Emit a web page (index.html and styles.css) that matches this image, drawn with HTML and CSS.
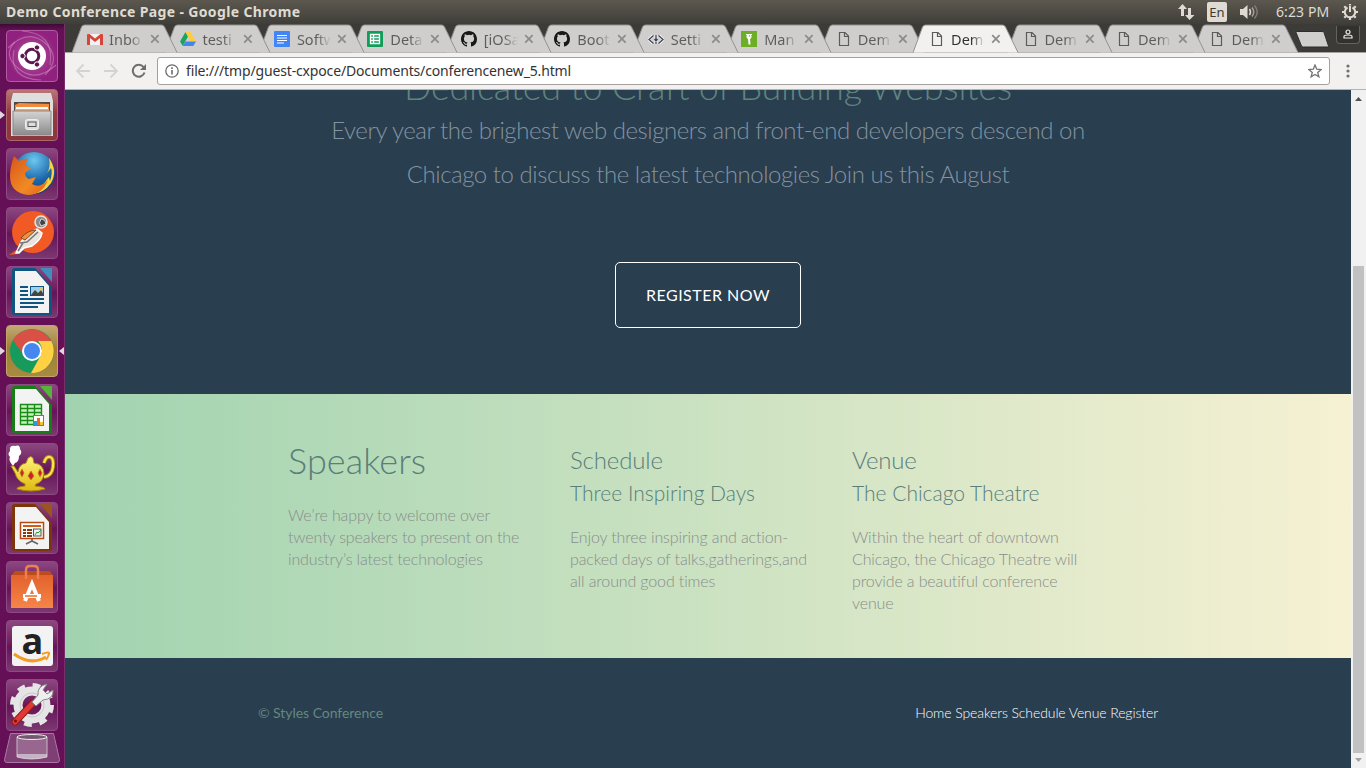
FILE: index.html
```
<!DOCTYPE html>
<html lang="en">
<head>
<meta charset="utf-8">
<title>Demo Conference Page</title>
<link rel="stylesheet" href="styles.css">
</head>
<body>
<svg class="defs" width="0" height="0">
  <defs>
    <linearGradient id="metal" x1="0" y1="0" x2="0" y2="1"><stop offset="0" stop-color="#d4d4d4"/><stop offset="1" stop-color="#8b8b8b"/></linearGradient>
    <linearGradient id="bag" x1="0" y1="0" x2="0" y2="1"><stop offset="0" stop-color="#e2622c"/><stop offset="1" stop-color="#f58549"/></linearGradient>
    <linearGradient id="gold" x1="0" y1="0" x2="0" y2="1"><stop offset="0" stop-color="#fff27a"/><stop offset="1" stop-color="#dfb80d"/></linearGradient>
    <radialGradient id="globe" cx=".5" cy=".2" r=".8"><stop offset="0" stop-color="#6cc8f0"/><stop offset=".6" stop-color="#1d67ab"/><stop offset="1" stop-color="#123c78"/></radialGradient>
    <linearGradient id="fox" x1="0" y1="0" x2="1" y2="1"><stop offset="0" stop-color="#d9541a"/><stop offset=".6" stop-color="#f08a24"/><stop offset="1" stop-color="#e2601a"/></linearGradient>
  </defs>
  <symbol id="close" viewBox="0 0 10 10"><path d="M1.2 1.2l7.4 7.4M8.600 1.200l-7.400 7.400" stroke="#8d8b89" stroke-width="1.7"/></symbol>
  <symbol id="page" viewBox="0 0 16 16"><path d="M4.500 1.500h5.500l3.500 3.500v9.500h-9zM9.500 1.500v4h4" fill="none" stroke="#5c5b59" stroke-width="1.200"/></symbol>
  <symbol id="octocat" viewBox="0 0 16 16"><path fill="#191717" d="M8 0C3.580 0 0 3.580 0 8c0 3.540 2.290 6.530 5.470 7.590.4.070.550-.170.550-.380 0-.190-.010-.820-.010-1.490-2.010.370-2.530-.490-2.690-.940-.090-.230-.480-.940-.820-1.130-.280-.150-.680-.520-.010-.530.630-.010 1.080.580 1.230.820.720 1.210 1.870.870 2.330.660.070-.520.280-.870.510-1.070-1.780-.2-3.640-.890-3.640-3.950 0-.870.310-1.590.820-2.150-.080-.2-.360-1.020.080-2.120 0 0 .670-.210 2.200.820a7.600 7.600 0 0 1 4 0c1.530-1.040 2.200-.820 2.200-.820.440 1.100.160 1.920.080 2.120.510.560.820 1.270.820 2.150 0 3.070-1.870 3.750-3.650 3.950.290.250.540.730.540 1.480 0 1.070-.010 1.930-.010 2.200 0 .210.150.460.550.380A8 8 0 0 0 16 8c0-4.420-3.580-8-8-8z"/></symbol>
</svg>

<header class="panel">
  <h1 class="panel-title">Demo Conference Page - Google Chrome</h1>
  <div class="indicators">
    <svg width="18" height="16" viewBox="0 0 18 16"><path fill="#dfdbd2" d="M5.500 0l4.500 5H7v7H4V5H1zM12.500 16l-4.500-5h3V4h3v7h3.500z"/></svg>
    <span class="lang">En</span>
    <svg width="20" height="16" viewBox="0 0 20 16"><path fill="#dfdbd2" d="M0 5h3l4.500-4v14L3 11H0z"/><g fill="none" stroke-width="1.500"><path stroke="#dfdbd2" d="M9.500 5q2 3 0 6"/><path stroke="#a5a299" d="M12 3.500q3.500 4.500 0 9"/><path stroke="#7e7b73" d="M14.500 1.500q5.500 6.500 0 13"/></g></svg>
    <span class="clock">6:23 PM</span>
    <svg width="18" height="18" viewBox="0 0 18 18"><g fill="none" stroke="#dfdbd2" stroke-width="2"><path d="M6.500 4.500a5.200 5.200 0 1 0 5 0M9 3v6"/><path stroke-width="2.200" d="M9 1v1.500M9 14.500V17M1 9h2.500M14.500 9H17M3.300 3.300l1.500 1.500M13.200 13.200l1.500 1.500M14.700 3.300l-1.500 1.500M4.800 13.200l-1.500 1.500"/></g></svg>
  </div>
</header>

<div class="desktop">
  <nav class="launcher">
    <div class="tile dash"><svg viewBox="0 0 52 52"><g fill="none" stroke="#d9a4cf" stroke-opacity=".45" stroke-width="1.200"><path d="M2 18Q22-2 39 13T39 45"/><path d="M50 35Q30 53 13 39T9 12"/><path d="M16 1q33 2 28 34M35 50Q2 49 8 20"/></g><circle cx="26" cy="26" r="14" fill="#fff"/><circle cx="26" cy="26" r="6.800" fill="none" stroke="#5c1751" stroke-width="3"/><g fill="#5c1751" stroke="#fff"><circle cx="16.500" cy="26" r="2.700"/><circle cx="31" cy="17.500" r="2.700"/><circle cx="31" cy="34.500" r="2.700"/></g></svg></div>
    <div class="tile files running"><svg viewBox="0 0 52 52"><path fill="#dedede" d="M7 4h38l2 8v35H5V12z"/><path fill="#514b47" d="M8 13h36v10H8z"/><path fill="#f58a3c" d="M9 16l4-2 30 1v6H9z"/><path fill="#fff" d="M10 18h32v2H10z"/><path fill="#f2a768" d="M9 20h34v2H9z"/><path fill="url(#metal)" d="M7 22h38v24H7z" stroke="#888"/><rect x="19.500" y="30.500" width="13" height="10" rx="2" fill="#ddd" stroke="#eee"/><rect x="22" y="33" width="8" height="4.500" fill="#ddd" stroke="#555"/></svg></div>
    <div class="tile"><svg viewBox="0 0 52 52"><circle cx="28" cy="25" r="21" fill="url(#globe)"/><path fill="#fcd638" d="M43 10q9 13 2 25-8 12-22 11l-7-5 17 1 10-13 1 4q3-9 1-13l-4 5q4-6 2-15z"/><path fill="url(#fox)" d="M8 8l5 5q6-3 9-2l-3 6 6 3-6 5q0 4 4 6l7-2-4 7q7 5 16-4-6 15-20 15Q4 45 4 28q0-9 4-20z"/></svg></div>
    <div class="tile"><svg viewBox="0 0 52 52"><circle cx="27" cy="25" r="21" fill="#f15a24"/><path fill="#f15a24" d="M3 48l10-7-2 6z"/><path fill="#e9e4df" stroke="#fff" stroke-width="1.500" d="M10 46l5-11q6-9 16-13l5 4q-1 7-10 13l-8 2-5 5z"/><path fill="#f5912e" stroke="#7a4b33" d="M15 31q7-8 15-8l-11 10z"/><path fill="none" stroke="#777" stroke-width="1.500" d="M14 36l7-1 11-10M12 44l5-8"/><circle cx="35" cy="15" r="6" fill="#888b8c" stroke="#e8e6e3" stroke-width="1.500"/><path fill="#444" stroke="#ddd" d="M35 12q4 0 5 5l-5 2q-3-3 0-7z"/></svg></div>
    <div class="tile"><svg viewBox="0 0 52 52"><path fill="#105481" d="M9 2h20l17 19v26q0 2-2 2H9q-3 0-3-3V5q0-3 3-3z"/><path fill="#f3f3f3" d="M9 5h21l13 15v27H9z"/><path fill="#438dbd" d="M34 2h12v14z"/><path stroke="#105481" stroke-width="2" d="M14 21h8M14 25h8M14 29h8M14 33h24M14 37h24M14 41h18"/><rect x="24.500" y="20.500" width="13" height="9" fill="#9ccfe9" stroke="#105481"/><path fill="#444" d="M25 29l4-5 3 3 3-3 3 5z"/><circle cx="35" cy="23" r="1.500" fill="#f9c440"/></svg></div>
    <div class="tile chrome running active"><svg viewBox="0 0 52 52"><circle cx="26" cy="26" r="22" fill="#169b5c"/><path fill="#d95045" d="M6.900 15A22 22 0 0 1 45.100 16H26a10 10 0 0 0-9 13z"/><path fill="#ffcf44" d="M45.300 16A22 22 0 0 1 25 48l10-18q3-7-3-14z"/><circle cx="26" cy="26" r="10" fill="#fff"/><circle cx="26" cy="26" r="8" fill="#4488ef"/></svg></div>
    <div class="tile"><svg viewBox="0 0 52 52"><path fill="#187d16" d="M9 2h20l17 19v26q0 2-2 2H9q-3 0-3-3V5q0-3 3-3z"/><path fill="#f3f3f3" d="M9 5h21l13 15v27H9z"/><path fill="#55b33a" d="M34 2h12v14z"/><path fill="#c8f0be" stroke="#188c17" stroke-width="1.400" d="M14.500 20.500h21v20h-21zM14 24.500h22M14 28.500h22M14 32.500h22M14 36.500h22M21.500 20v20M28.500 20v20"/><rect x="27.500" y="31.500" width="10" height="10" fill="#fff" stroke="#777"/><path fill="#2a9ae0" d="M28 37h3v4h-3z"/><path fill="#e66a21" d="M31 34h3v7h-3z"/><path fill="#f1c22e" d="M34 38h3v3h-3z"/></svg></div>
    <div class="tile"><svg viewBox="0 0 52 52"><path fill="#fff" d="M7 23q-5-6-3-9-3-3 0-6-1-6 5-5 5-2 5 3 3 4-1 7 0 6-4 7z"/><path fill="none" stroke="#a88610" stroke-width="4" d="M38 20q2-7 6-6 4 1 3 10-1 9-9 10"/><path fill="none" stroke="#f9e54d" stroke-width="2.200" d="M38 20q2-7 6-6 4 1 3 10-1 9-9 10"/><path fill="url(#gold)" stroke="#a88610" d="M5 23l3 0 4 6q1-8 8-9l2-5q3-3 5 0l1 5q10 1 10 11-1 8-8 10l-1 2q10 1 10 3-14 4-28 0-1-2 8-3v-2q-8-3-10-11z"/><path fill="#d21d2c" stroke="#ac8b12" stroke-width=".7" d="M16 26l2 4-2 4-2-4zM25 28l3 5-3 4-3-4zM34 26l2 4-2 4-2-4z"/></svg></div>
    <div class="tile"><svg viewBox="0 0 52 52"><path fill="#7d3509" d="M9 2h20l17 19v26q0 2-2 2H9q-3 0-3-3V5q0-3 3-3z"/><path fill="#f3f3f3" d="M9 5h21l13 15v27H9z"/><path fill="#9b5422" d="M34 2h12v14z"/><path fill="#fff" stroke="#b64a10" stroke-width="1.500" d="M14.500 20.500h23v16h-23z"/><path stroke="#d35b16" stroke-width="2" d="M17 24h18"/><path stroke="#883b11" stroke-width="2" stroke-dasharray="3 1 6" d="M17 28h9M17 31h9M17 34h9"/><rect x="27.500" y="27" width="7.500" height="7" fill="#eee" stroke="#555"/><path fill="none" stroke="#2aa33a" d="M29 33l2-3 1 1 3-3"/><path fill="none" stroke="#666" stroke-width="1.700" d="M26 37v2l-6 3M26 39l6 3"/></svg></div>
    <div class="tile"><svg viewBox="0 0 52 52"><path fill="#bd4c1d" d="M5 15l4-5h35l3 5z"/><path fill="url(#bag)" d="M5 14h42v33H5z"/><path fill="none" stroke="#ec8052" stroke-width="2.500" d="M20 18V9q0-4 4-4h4q4 0 4 4v9"/><path fill="none" stroke="#fff" stroke-width="4" d="M19 40l7-17 7 17"/><path stroke="#fff" stroke-width="4" d="M17 35h18"/><path stroke="#ed6a2e" stroke-width="1.500" d="M19 35h12"/></svg></div>
    <div class="tile"><svg viewBox="0 0 52 52"><rect x="6" y="6" width="41" height="40" rx="3" fill="#f3f3f3"/><text class="amazon-a" x="15.500" y="33.500">a</text><path fill="none" stroke="#f79a20" stroke-width="3" d="M8 34q17 12 32 3"/><path fill="none" stroke="#f79a20" stroke-width="2" d="M36 34q8-3 7 0t-3 6"/></svg></div>
    <div class="tile"><svg viewBox="0 0 52 52"><g fill="none" stroke="#e5e5e5"><circle cx="26" cy="26" r="14" stroke-width="9"/><circle cx="26" cy="26" r="19.500" stroke-width="5" stroke-dasharray="7.660 7.660"/></g><circle cx="26" cy="26" r="12" fill="none" stroke="#c9c9c9"/><path stroke="#9b1717" stroke-width="7" stroke-linecap="round" d="M9 43l18-19"/><path stroke="#dc3a35" stroke-width="5" stroke-linecap="round" d="M9 43l18-19"/><path fill="#eee" stroke="#888" d="M26 23l6-7q-1-9 9-11l-4 6 4 4 6-4q1 9-10 10l-7 6z"/><circle cx="9.500" cy="42" r="1.500" fill="#711"/></svg></div>
    <div class="trash"><svg viewBox="0 0 56 31"><path fill="#7f3f75" stroke="#a87aa1" d="M6.500.5h43l6 26q0 3-2 3h-51q-2 0-2-3z"/><path fill="#b59ab1" fill-opacity=".45" stroke="#c9bcc7" d="M13 4v20q14 4 30 0V4z"/><ellipse cx="28" cy="4" rx="15" ry="2.500" fill="#735a70" stroke="#eee"/><path fill="#e8e3e7" fill-opacity=".6" d="M13 21h30v3q-15 4-30 0z"/></svg></div>
  </nav>

  <section class="browser">
    <div class="tabs">
      <div class="tab"><svg class="shape" viewBox="0 0 105 29"><path d="M0 28.500L9.500 3q1-2 3-2h77q2 0 3 2L105 28.500"/></svg><svg class="icon" viewBox="0 0 16 16"><path fill="#f2f2f2" d="M1 3h14v11H1z"/><path d="M1 3h1.500L8 7.500 13.500 3H15q1 0 1 1v10h-3V7L8 11 3 7v7H0V4q0-1 1-1z" fill="#d8443a"/></svg><span>Inbo</span><svg class="x"><use href="#close"/></svg></div>
      <div class="tab"><svg class="shape" viewBox="0 0 105 29"><path d="M0 28.500L9.500 3q1-2 3-2h77q2 0 3 2L105 28.500"/></svg><svg class="icon" viewBox="0 0 16 16"><path fill="#19a461" d="M5.500 1L0 10.500 2.800 15 8 5.500z"/><path fill="#fdcc3f" d="M5.500 1h5L16 10.500h-5.500z"/><path fill="#4285ee" d="M5.500 10.500H16L13.300 15H2.800z"/></svg><span>testi</span><svg class="x"><use href="#close"/></svg></div>
      <div class="tab"><svg class="shape" viewBox="0 0 105 29"><path d="M0 28.500L9.500 3q1-2 3-2h77q2 0 3 2L105 28.500"/></svg><svg class="icon" viewBox="0 0 16 16"><rect width="16" height="16" rx="1" fill="#4285f4"/><path stroke="#fff" stroke-width="1.200" d="M3 4.500h10M3 7h10M3 9.500h10M3 12h7"/></svg><span>Softw</span><svg class="x"><use href="#close"/></svg></div>
      <div class="tab"><svg class="shape" viewBox="0 0 105 29"><path d="M0 28.500L9.500 3q1-2 3-2h77q2 0 3 2L105 28.500"/></svg><svg class="icon" viewBox="0 0 16 16"><rect width="16" height="16" rx="1" fill="#0f9d58"/><path fill="none" stroke="#fff" stroke-width="1.300" d="M3.500 3.500h9v9h-9zM3.500 6.500h9M3.500 9.500h9M6.500 3.500v9"/></svg><span>Deta</span><svg class="x"><use href="#close"/></svg></div>
      <div class="tab"><svg class="shape" viewBox="0 0 105 29"><path d="M0 28.500L9.500 3q1-2 3-2h77q2 0 3 2L105 28.500"/></svg><svg class="icon"><use href="#octocat"/></svg><span>[iOSa</span><svg class="x"><use href="#close"/></svg></div>
      <div class="tab"><svg class="shape" viewBox="0 0 105 29"><path d="M0 28.500L9.500 3q1-2 3-2h77q2 0 3 2L105 28.500"/></svg><svg class="icon"><use href="#octocat"/></svg><span>Boot</span><svg class="x"><use href="#close"/></svg></div>
      <div class="tab"><svg class="shape" viewBox="0 0 105 29"><path d="M0 28.500L9.500 3q1-2 3-2h77q2 0 3 2L105 28.500"/></svg><svg class="icon" viewBox="0 0 16 16"><g fill="none" stroke="#f5f5f5" stroke-width="3"><path d="M5 4.500L1 8.500l4 4M11 4.500l4 4-4 4M8 4v9"/></g><g fill="none" stroke="#3c4252" stroke-width="1.300"><path d="M5.500 4.500L1 8.500l4.500 4M10.500 4.500l4.500 4-4.500 4M8 4v5M6.500 8L8 10l1.500-2M8 11v2"/></g></svg><span>Setti</span><svg class="x"><use href="#close"/></svg></div>
      <div class="tab"><svg class="shape" viewBox="0 0 105 29"><path d="M0 28.500L9.500 3q1-2 3-2h77q2 0 3 2L105 28.500"/></svg><svg class="icon" viewBox="0 0 16 16"><path fill="#6dae27" d="M0 0h16v16H0z"/><path fill="none" stroke="#fff" stroke-width="2" d="M8.500 13.500L8 7"/><circle cx="8" cy="5.500" r="2.500" fill="#fff"/><path stroke="#fff" d="M5 3.500h2M9 3.500h2"/><circle cx="8.500" cy="5" r=".8" fill="#6dae27"/></svg><span>Man</span><svg class="x"><use href="#close"/></svg></div>
      <div class="tab"><svg class="shape" viewBox="0 0 105 29"><path d="M0 28.500L9.500 3q1-2 3-2h77q2 0 3 2L105 28.500"/></svg><svg class="icon"><use href="#page"/></svg><span>Dem</span><svg class="x"><use href="#close"/></svg></div>
      <div class="tab current"><svg class="shape" viewBox="0 0 105 29"><path d="M0 28.500L9.500 3q1-2 3-2h77q2 0 3 2L105 28.500"/></svg><svg class="icon"><use href="#page"/></svg><span>Dem</span><svg class="x"><use href="#close"/></svg></div>
      <div class="tab"><svg class="shape" viewBox="0 0 105 29"><path d="M0 28.500L9.500 3q1-2 3-2h77q2 0 3 2L105 28.500"/></svg><svg class="icon"><use href="#page"/></svg><span>Dem</span><svg class="x"><use href="#close"/></svg></div>
      <div class="tab"><svg class="shape" viewBox="0 0 105 29"><path d="M0 28.500L9.500 3q1-2 3-2h77q2 0 3 2L105 28.500"/></svg><svg class="icon"><use href="#page"/></svg><span>Dem</span><svg class="x"><use href="#close"/></svg></div>
      <div class="tab"><svg class="shape" viewBox="0 0 105 29"><path d="M0 28.500L9.500 3q1-2 3-2h77q2 0 3 2L105 28.500"/></svg><svg class="icon"><use href="#page"/></svg><span>Dem</span><svg class="x"><use href="#close"/></svg></div>
      <svg class="new-tab" width="34" height="17" viewBox="0 0 34 17"><path fill="#d0cecc" stroke="#2e2d29" d="M2 .5h25q1.500 0 2 1L33.500 15q0 1-1 1h-24q-1.500 0-2-1L1 1.500q0-1 1-1z"/></svg>
      <div class="profile"><svg width="10" height="10" viewBox="0 0 10 10"><path fill="none" stroke="#eee" stroke-width="1.200" d="M1 9V7.500Q1 6 5 6t4 1.500V9z"/><circle cx="5" cy="3" r="2" fill="none" stroke="#eee" stroke-width="1.200"/></svg></div>
    </div>
    <div class="toolbar">
      <svg width="16" height="16" viewBox="0 0 16 16"><path fill="none" stroke="#d5d3d1" stroke-width="1.800" d="M15 8H2M8.500 1.500L2 8l6.500 6.500"/></svg>
      <svg width="16" height="16" viewBox="0 0 16 16"><path fill="none" stroke="#d5d3d1" stroke-width="1.800" d="M1 8h13M7.500 1.500L14 8l-6.500 6.500"/></svg>
      <svg width="16" height="16" viewBox="0 0 16 16"><path fill="none" stroke="#6e6d6b" stroke-width="2" d="M13.500 9.500A6 6 0 1 1 12.500 4L14 5.500"/><path fill="#6e6d6b" d="M15 1v6H9z"/></svg>
      <div class="address">
        <svg width="14" height="14" viewBox="0 0 14 14"><circle cx="7" cy="7" r="6.200" fill="none" stroke="#6b6b6b" stroke-width="1.300"/><path stroke="#6b6b6b" stroke-width="1.600" d="M7 6v4.500M7 3.300v1.600"/></svg>
        <span class="url">file:///tmp/guest-cxpoce/Documents/conferencenew_5.html</span>
        <svg width="14" height="14" viewBox="0 0 14 14"><path fill="none" stroke="#737373" stroke-width="1.300" d="M7 1l1.700 4.200 4.500.3-3.500 2.900 1.200 4.400L7 10.400l-3.900 2.400 1.200-4.400L.8 5.500l4.500-.3z"/></svg>
      </div>
      <svg class="menu" width="4" height="14" viewBox="0 0 4 14"><g fill="#707070"><circle cx="2" cy="2" r="1.600"/><circle cx="2" cy="7" r="1.600"/><circle cx="2" cy="12" r="1.600"/></g></svg>
    </div>
    <div class="viewport">
      <main class="site">
        <section class="hero">
          <h2>Dedicated to Craft of Building Websites</h2>
          <p>Every year the brighest web designers and front-end developers descend on<br>Chicago to discuss the latest technologies Join us this August</p>
          <a class="btn">Register Now</a>
        </section>
        <section class="teasers">
          <article><h1>Speakers</h1><p>We’re happy to welcome over twenty speakers to present on the industry’s latest technologies</p></article>
          <article><h3>Schedule</h3><h5>Three Inspiring Days</h5><p>Enjoy three inspiring and action-packed days of talks,gatherings,and all around good times</p></article>
          <article><h3>Venue</h3><h5>The Chicago Theatre</h5><p>Within the heart of downtown Chicago, the Chicago Theatre will provide a beautiful conference venue</p></article>
        </section>
        <footer class="site-footer">
          <small>© Styles Conference</small>
          <nav><a>Home</a> <a>Speakers</a> <a>Schedule</a> <a>Venue</a> <a>Register</a></nav>
        </footer>
      </main>
      <div class="scrollbar">
        <svg width="7" height="4" viewBox="0 0 7 4"><path fill="#505050" d="M3.500 0L7 4H0z"/></svg>
        <div class="thumb"></div>
        <svg width="7" height="4" viewBox="0 0 7 4"><path fill="#a3a3a3" d="M0 0h7L3.500 4z"/></svg>
      </div>
    </div>
  </section>
</div>
</body>
</html>
```
FILE: styles.css
```
* { box-sizing: border-box; }
body { margin: 0; width: 1366px; height: 768px; overflow: hidden; font-family: "Noto Sans", sans-serif; display: flex; flex-direction: column; }
h1, h2, h3, h5, p { margin: 0; }
svg { display: block; flex: none; }
.defs { position: absolute; }

.panel { height: 24px; flex: none; display: flex; align-items: center; justify-content: space-between; padding: 0 7px 0 6px; background: linear-gradient(#5c584f, #3f3e39); color: #dfdbd2; }
.panel-title { font-size: 14px; line-height: 24px; font-weight: 700; white-space: nowrap; letter-spacing: .36px; }
.indicators { display: flex; align-items: center; }
.lang { width: 20px; height: 20px; margin: 0 13px 0 12px; border-radius: 2px; background: #dfdbd2; color: #3c3b37; font-size: 13px; line-height: 21px; text-align: center; }
.clock { margin: 0 11px 0 16px; width: 54px; font-size: 14px; line-height: 24px; white-space: nowrap; letter-spacing: .1px; }

.desktop { flex: 1; min-height: 0; display: flex; }
.launcher { width: 65px; flex: none; display: flex; flex-direction: column; gap: 7px; padding: 6px 6px 0 6px; background: linear-gradient(#3d0b35, #650f57 6px); border-right: 1px solid #7a2f6d; }
.tile { position: relative; height: 52px; flex: none; border-radius: 4px; border: 1px solid #8e4a83; background: linear-gradient(#8b4780, #70205f 42%, #651457 52%, #7b3870); }
.tile svg { width: 52px; height: 52px; margin: -1px; }
.tile.dash { background: radial-gradient(#b655a3, #91217f 70%); border-color: #b15aa3; }
.tile.files { background: linear-gradient(#b97679, #92393f 45%, #8c363e); border-color: #ab6868; }
.tile.chrome { background: linear-gradient(#c2a875, #a17e34 45%, #a78b42); border-color: #c3a568; }
.running::before { content: ""; position: absolute; left: -7px; top: 21px; border: 4px solid transparent; border-left: 5px solid #e0d7de; border-right: 0; }
.active::after { content: ""; position: absolute; right: -7px; top: 21px; border: 4px solid transparent; border-right: 5px solid #e0d7de; border-left: 0; }
.trash { height: 31px; flex: none; margin: -5px -2px 0; }
.trash svg { width: 56px; height: 31px; }
.amazon-a { font: 700 36px "Open Sans", sans-serif; fill: #222; }

.browser { flex: 1; min-width: 0; display: flex; flex-direction: column; }
.tabs { height: 29px; flex: none; display: flex; padding: 0 0 0 7px; background: #3c3b37; border-bottom: 1px solid #a5a3a1; }
.tab { position: relative; width: 105px; height: 29px; flex: none; margin-right: -11.550px; display: flex; align-items: center; padding: 1px 0 0 15px; z-index: 0; }
.tab .shape { position: absolute; left: 0; top: 0; width: 105px; height: 29px; z-index: -1; overflow: visible; }
.shape path { fill: #d0cecc; stroke: #959391; }
.tab .icon { width: 16px; height: 16px; }
.tab span { width: 35px; margin: 0 9px 0 6px; font-size: 14.500px; line-height: 24px; color: transparent; background: linear-gradient(90deg, #5d5c5b 60%, #5d5c5b00); background-clip: text; overflow: hidden; white-space: nowrap; }
.tab .x { width: 10px; height: 10px; margin-left: -3px; }
.tab:nth-child(n+3) span { text-indent: 1px; }
.tab:nth-child(1) { z-index: 8; }
.tab:nth-child(2) { z-index: 7; }
.tab:nth-child(3) { z-index: 6; }
.tab:nth-child(4) { z-index: 5; }
.tab:nth-child(5) { z-index: 4; }
.tab:nth-child(6) { z-index: 3; }
.tab:nth-child(7) { z-index: 2; }
.tab:nth-child(8) { z-index: 1; }
.tab:nth-child(11) { z-index: 2; }
.tab:nth-child(12) { z-index: 1; }
.tab.current { z-index: 9; }
.tab.current::after { content: ""; position: absolute; left: 1px; right: 1px; bottom: -1px; height: 1px; background: #f2f1f0; }
.current .shape path { fill: #f2f1f0; }
.tab.current span { background-image: linear-gradient(90deg, #30302f 60%, #30302f00); }
.new-tab { margin: 7px 0 0 8px; }
.profile { width: 24px; height: 18px; margin: 2px 0 0 7px; border: 1px solid #65635e; border-top: 0; border-radius: 0 0 4px 4px; background: #32312d; padding: 3px 6px; }
.toolbar { height: 37px; flex: none; display: flex; align-items: center; gap: 12px; padding: 0 0 0 10px; background: #f2f1f0; border-bottom: 1px solid #b5b3b1; }
.address { width: 1173px; height: 28px; display: flex; align-items: center; gap: 7px; margin: 0 0 0 -2px; padding: 0 7px; border: 1px solid #a3a19f; border-radius: 3px; background: #fff; }
.url { flex: 1; font-size: 14px; line-height: 20px; color: #333; white-space: nowrap; letter-spacing: -.15px; }
.menu { margin-left: 4px; }

.viewport { flex: 1; min-height: 0; display: flex; }
.site { flex: 1; min-width: 0; overflow: hidden; font: 300 16px/22px Lato, sans-serif; color: #898d8c; }
.hero { height: 304px; overflow: hidden; background: #293e4f; display: flex; flex-direction: column; align-items: center; padding: 0 243px; text-align: center; }
.hero h2 { margin-top: -26px; font-size: 36px; line-height: 44px; font-weight: 300; color: #5f847f; white-space: nowrap; letter-spacing: -.21px; }
.hero p { font-size: 24px; line-height: 44px; font-weight: 300; color: #8493a0; letter-spacing: -.45px; }
.btn { margin-top: 66px; padding: 21px 30px; border: 1px solid #fff; border-radius: 5px; color: #fff; font-weight: 400; letter-spacing: .5px; text-transform: uppercase; }
.teasers { height: 264px; display: grid; grid-template-columns: 240px 240px 240px; column-gap: 42px; padding: 44px 0 0 223px; background: linear-gradient(90deg, #a1d3b0, #f6f1d3); }
.teasers h1, .teasers h3, .teasers h5 { font-weight: 300; color: #5a7e79; }
.teasers h1 { font-size: 36px; line-height: 44px; margin-bottom: 22px; letter-spacing: .1px; }
.teasers h3 { font-size: 24px; line-height: 44px; letter-spacing: -.15px; }
.teasers h5 { font-size: 21px; line-height: 22px; margin-bottom: 22px; }
.teasers p { letter-spacing: -.13px; }
.site-footer { height: 110px; display: flex; justify-content: space-between; padding: 44px 193px 0; background: #293e4f; font-size: 14px; }
.site-footer small { font-size: 14px; font-weight: 400; color: #648880; letter-spacing: -.05px; }
.site-footer nav { color: #fff; letter-spacing: -.1px; }
.scrollbar { width: 15px; flex: none; display: flex; flex-direction: column; align-items: center; padding: 7px 0 5px; background: #f1f1f1; }
.thumb { width: 11px; height: 487px; margin: 165px 0 5px; background: #c1c1c1; }
```
